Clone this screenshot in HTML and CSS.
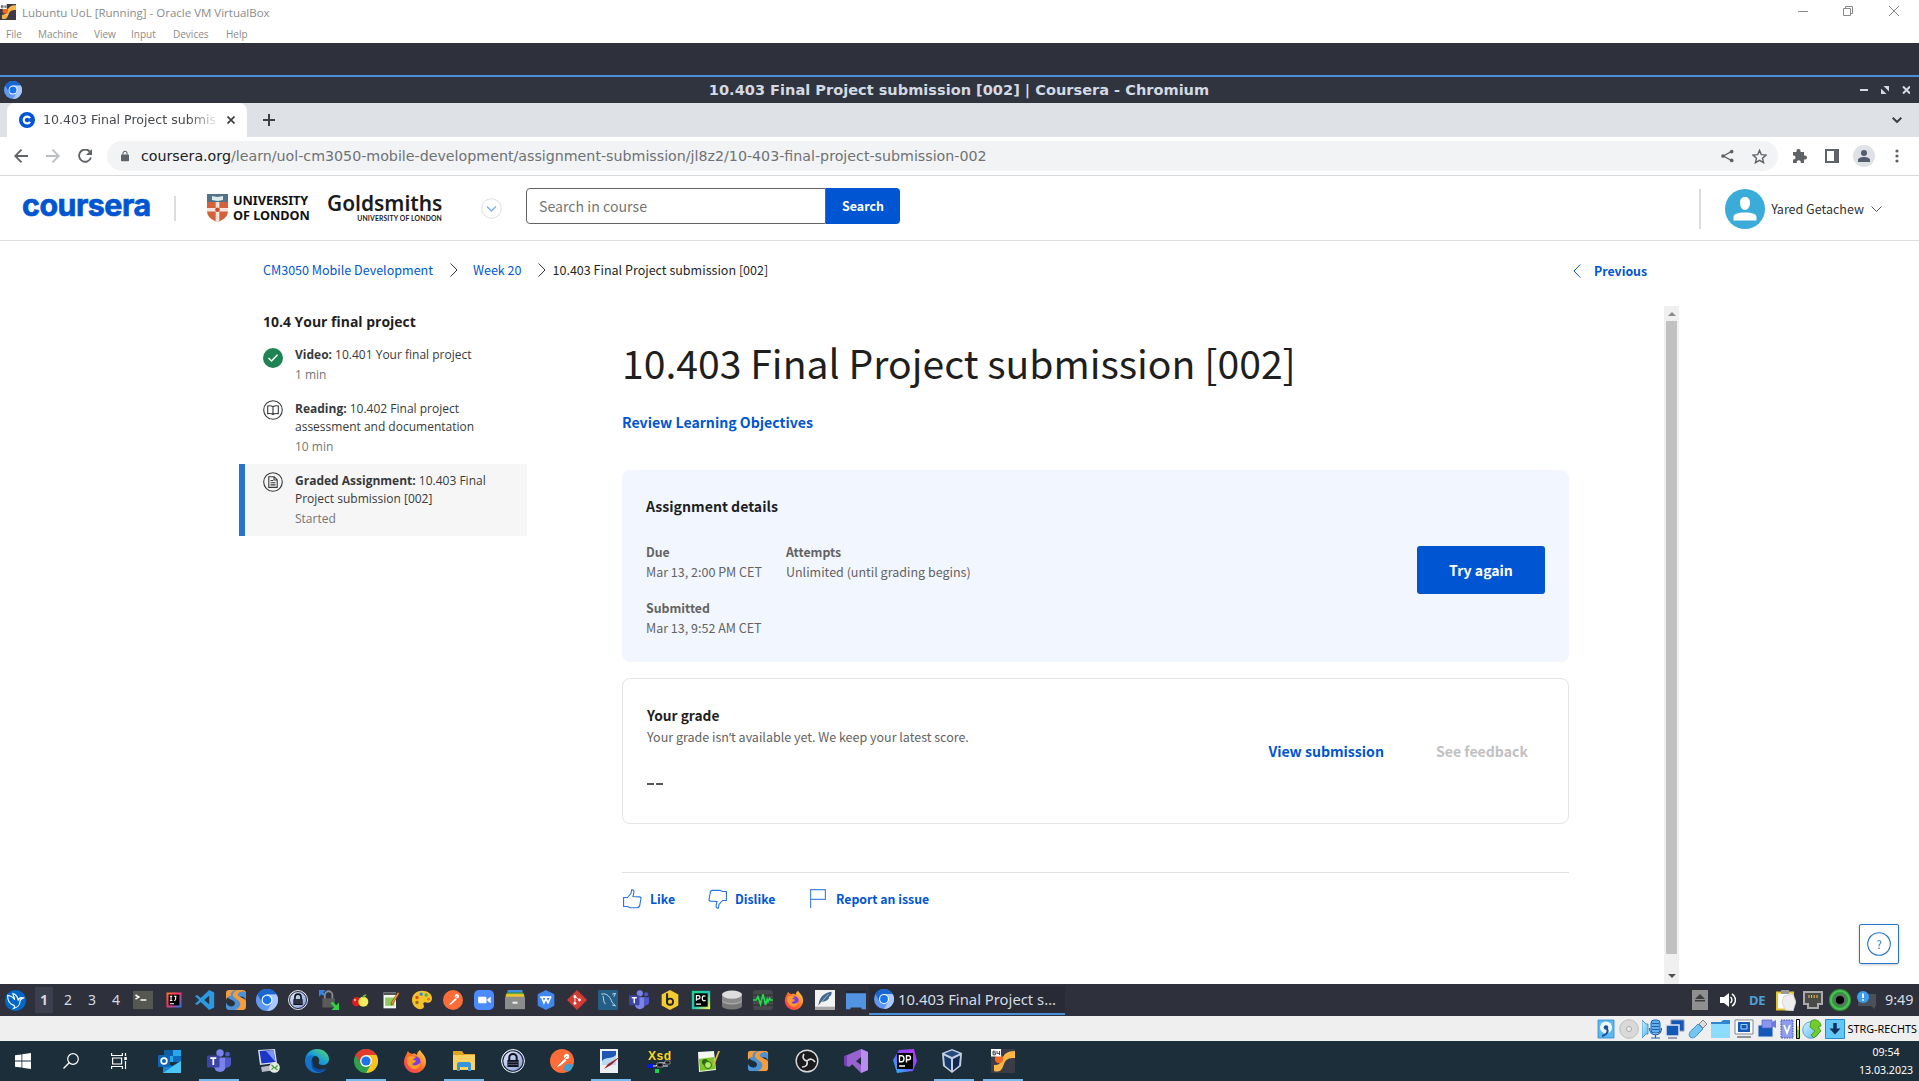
FILE: index.html
```html
<!DOCTYPE html>
<html lang="en">
<head>
<meta charset="utf-8">
<title>Lubuntu UoL [Running] - Oracle VM VirtualBox</title>
<link rel="stylesheet" href="styles.css">
</head>
<body>
<svg class="sprite" aria-hidden="true">
  <defs>
    <linearGradient id="g-edge" x1="0" y1="1" x2="1" y2="0"><stop offset="0" stop-color="#1565c0"/><stop offset=".5" stop-color="#1ba0d8"/><stop offset="1" stop-color="#5fe05a"/></linearGradient>
    <linearGradient id="g-fox" x1="0" y1="1" x2="1" y2="0"><stop offset="0" stop-color="#ff2f6b"/><stop offset=".5" stop-color="#ff6a2a"/><stop offset="1" stop-color="#ffe14a"/></linearGradient>
    <linearGradient id="g-ij" x1="0" y1="0" x2="1" y2="1"><stop offset="0" stop-color="#f9742a"/><stop offset=".45" stop-color="#fe2f6d"/><stop offset="1" stop-color="#187bf2"/></linearGradient>
    <linearGradient id="g-pc" x1="0" y1="0" x2="1" y2="1"><stop offset="0" stop-color="#21d789"/><stop offset=".5" stop-color="#1ac6b9"/><stop offset="1" stop-color="#fcf84a"/></linearGradient>
    <linearGradient id="g-dp" x1="1" y1="0" x2="0" y2="1"><stop offset="0" stop-color="#c238f0"/><stop offset=".5" stop-color="#7a4cff"/><stop offset="1" stop-color="#18c8f5"/></linearGradient>
    <linearGradient id="g-key" x1="0" y1="0" x2="1" y2="1"><stop offset="0" stop-color="#e9efff"/><stop offset="1" stop-color="#7d96d8"/></linearGradient>
    <linearGradient id="g-sky" x1="0" y1="0" x2="1" y2="1"><stop offset="0" stop-color="#d8f2ff"/><stop offset="1" stop-color="#4fb6ee"/></linearGradient>
  </defs>
  <symbol id="chromium" viewBox="0 0 24 24"><circle cx="12" cy="12" r="12" fill="#5f99f3"/><path d="M12 6h10.4A12 12 0 0 0 1.6 6l5.2 9z" fill="#1a66cf"/><path d="M12 6h10.4A12 12 0 0 1 12 24l5.2-9z" fill="#a9c8fb"/><circle cx="12" cy="12" r="5.9" fill="#fff"/><circle cx="12" cy="12" r="4.7" fill="#1a73e8"/></symbol>
  <symbol id="chrome" viewBox="0 0 24 24"><circle cx="12" cy="12" r="12" fill="#2ca24c"/><path d="M12 6h10.4A12 12 0 0 0 1.6 6l5.2 9z" fill="#e33b2e"/><path d="M12 6h10.4A12 12 0 0 1 12 24l5.2-9z" fill="#fcc31e"/><circle cx="12" cy="12" r="5.9" fill="#fff"/><circle cx="12" cy="12" r="4.6" fill="#1a73e8"/></symbol>
  <symbol id="firefox" viewBox="0 0 24 24"><path d="M3 6c1-1 1-3 2-4 1 2 2 2 4 3 2-1 4 0 5 1 0-2 1-4 3-5 1 3 6 5 6 12 0 6-5 11-11 11S1 19 1 13c0-3 1-5 2-7z" fill="url(#g-fox)"/><circle cx="12.5" cy="12.5" r="5" fill="#7a3fe0"/><path d="M4 9c3-3 8-2 9 0-2 0-3 1-3 2 1 0 3 0 3 1-1 2-3 2-4 3 1 2 5 2 8-1 0 4-3 6-6 6-5 0-8-6-7-11z" fill="#ff9b2b"/></symbol>
  <symbol id="keepass" viewBox="0 0 24 24"><circle cx="12" cy="12" r="11.4" fill="url(#g-key)" stroke="#f4f6fb" stroke-width="1"/><circle cx="12" cy="12" r="10.2" fill="none" stroke="#1b2030" stroke-width="1.1"/><path d="M8.3 11V8.6a3.7 3.7 0 0 1 7.4 0V11" fill="none" stroke="#10131c" stroke-width="2"/><path d="M6.4 11h11.2v7H6.4z" fill="#10131c"/><path d="M7 13.2h10M7 15.6h10" stroke="#8090b8" stroke-width=".6"/></symbol>
  <symbol id="teams" viewBox="0 0 24 24"><circle cx="13" cy="4" r="3.7" fill="#7b83eb"/><circle cx="20.5" cy="5.2" r="2.4" fill="#5059c9"/><path d="M7 8.6h12V17a6 6 0 0 1-12 0z" fill="#7b83eb"/><path d="M18 8.6h6V15a4 4 0 0 1-6 3z" fill="#5059c9"/><rect y="6.4" width="12.5" height="12" rx="1" fill="#3c45a5"/><path d="M3.3 9.2h6M6.3 9.2V16" stroke="#fff" stroke-width="1.7"/></symbol>
  <symbol id="postman" viewBox="0 0 24 24"><circle cx="12" cy="12" r="12" fill="#ff6c37"/><path d="M6 18l8.500-8.500 2 2L10 17z" fill="#fff"/><circle cx="16.600" cy="7.400" r="2.600" fill="#fff"/><path d="M6 18L17 7" stroke="#e8532a" stroke-width=".7"/></symbol>
  <symbol id="swirl" viewBox="0 0 24 24"><path d="M0 4c0-3 2-4 4-4h13c-6 1-8 5-7 8 1 2 4 3 6 4 5 3 4 9-2 12H4c-3 0-4-2-4-4v-5c2 5 8 6 10 3 2-2 0-5-3-6C2 10 0 8 0 4z" fill="#4b93d6"/><path d="M0 4c0-3 2-4 4-4h10C8 2 7 7 10 9c3 3 8 4 7 9-1 3-3 5-6 6h9c3 0 4-2 4-4v-7c-1-3-5-3-7-5-2-3 0-6 4-6l3 3V4c0-3-2-4-4-4h-6C7 0 5 4 6 7c-3 0-5 2-6 5z" fill="#f79c3c"/><path d="M14 5c2-4 8-4 10-1v9c-1-5-5-6-8-5 0 0-2-1-2-3z" fill="#4b93d6"/></symbol>
  <symbol id="putty" viewBox="0 0 24 24"><path fill="#3a3d48" d="M0 0h24v24H0z"/><path d="M3 22c7 2 8-2 10-7s4-6 11-6V2c-8 0-11 3-13 8s-3 6-8 6z" fill="#ffb645"/><circle cx="8" cy="10" r="4.200" fill="#f2691f"/><path d="M0 0h10v7.500H0z" fill="#fff"/><path d="M4.600 2.200H2v3.600h2.600v-2H2M6 2v2.400h3M8.600 2v4" stroke="#333" stroke-width=".9" fill="none"/></symbol>
  <symbol id="chev-r" viewBox="0 0 8 14"><path d="M.7.5L7 7 .7 13.500" fill="none" stroke="currentColor" stroke-width="1"/></symbol>
</svg>

<header class="vm-title">
  <div class="vm-caption">
    <svg class="vm-icon"><use href="#putty"/></svg><span class="vm-name">Lubuntu UoL [Running] - Oracle VM VirtualBox</span>
    <svg class="vm-controls" viewBox="0 0 102 12"><g fill="none" stroke="#8a8a8a"><path d="M0 6.500h10M45.500 3.500h7v7h-7zM47.500 3.500v-2h7v7h-2M91 1l10 10M101 1L91 11"/></g></svg>
  </div>
  <nav class="vm-menu"><span class="m1">File</span><span class="m2">Machine</span><span class="m3">View</span><span class="m4">Input</span><span class="m5">Devices</span><span>Help</span></nav>
</header>
<div class="desk-strip"></div>
<div class="win-title">
  <svg class="win-icon"><use href="#chromium"/></svg>
  <span class="win-name">10.403 Final Project submission [002] | Coursera - Chromium</span>
  <svg class="win-controls" viewBox="0 0 50 10"><path d="M0 4h8v2H0zM23.500 1h5.500v5.500zM21 3.500V9h5.500z" fill="#d3dae3"/><path d="M43 1.500l7 7M50 1.500l-7 7" stroke="#d3dae3" stroke-width="2"/></svg>
</div>

<div class="tabs">
  <div class="tab">
    <svg class="favicon" viewBox="0 0 16 16"><circle cx="8" cy="8" r="8" fill="#0056d2"/><path d="M11 6.200a3.400 3.400 0 1 0 0 3.600" fill="none" stroke="#fff" stroke-width="2.200"/></svg>
    <span class="tab-text">10.403 Final Project submis</span>
    <svg class="tab-x" viewBox="0 0 8 8"><path d="M.5.500l7 7M7.500.500l-7 7" stroke="#3c4043" stroke-width="1.700"/></svg>
  </div>
  <svg class="plus" viewBox="0 0 12 12"><path d="M6 0v12M0 6h12" stroke="#3c4043" stroke-width="2"/></svg>
  <svg class="tab-chev" viewBox="0 0 10 6"><path d="M.7.700L5 5 9.300.700" fill="none" stroke="#3c4043" stroke-width="2"/></svg>
</div>

<div class="toolbar">
  <svg class="nav-icon" viewBox="0 0 14 14"><path d="M7.500.700L1.200 7l6.300 6.300M1.200 7H14" fill="none" stroke="#5f6368" stroke-width="1.800"/></svg>
  <svg class="nav-icon" viewBox="0 0 14 14"><path d="M6.500.700L12.800 7l-6.300 6.300M12.800 7H0" fill="none" stroke="#bcbfc2" stroke-width="1.800"/></svg>
  <svg class="nav-icon" viewBox="0 0 14 14"><path d="M11.800 2.600A6.100 6.100 0 1 0 13 8.500" fill="none" stroke="#5f6368" stroke-width="1.900"/><path d="M14 0v6H8z" fill="#5f6368"/></svg>
  <div class="omnibox">
    <svg class="lock" viewBox="0 0 10 13"><path d="M1 4.500h8a1 1 0 0 1 1 1V12a1 1 0 0 1-1 1H1a1 1 0 0 1-1-1V5.500a1 1 0 0 1 1-1z" fill="#5f6368"/><path d="M2.500 5V3a2.500 2.500 0 0 1 5 0v2" fill="none" stroke="#5f6368" stroke-width="1.300"/></svg>
    <span class="url"><b>coursera.org</b>/learn/uol-cm3050-mobile-development/assignment-submission/jl8z2/10-403-final-project-submission-002</span>
    <svg class="share" viewBox="0 0 14 14"><path d="M11.500 2L2.500 7l9 5" fill="none" stroke="#5f6368" stroke-width="1.300"/><g fill="#5f6368"><circle cx="11.500" cy="2.200" r="2"/><circle cx="2.200" cy="7" r="2"/><circle cx="11.500" cy="11.800" r="2"/></g></svg>
    <svg class="star" viewBox="0 0 14 14"><path d="M7 1.300l1.750 4 4.350.4-3.300 2.850 1 4.250L7 10.550 3.200 12.800l1-4.250L.9 5.700l4.350-.4z" fill="none" stroke="#5f6368" stroke-width="1.300"/></svg>
  </div>
  <svg class="ext" viewBox="0 0 15 15"><path d="M1 3h3.500C4 1 5 0 6.500 0S9 1 8.500 3H12v3.500c2-.4 3 .5 3 2s-1 2.400-3 2V14H8.800c.3-2-.8-2.800-2-2.800s-2.300.8-2 2.800H1v-3.500c1.800.2 2.500-.8 2.500-2S2.800 6.300 1 6.500z" fill="#5f6368"/></svg>
  <svg class="panel" viewBox="0 0 14 14"><path d="M0 0h14v14H0zM2 2v10h7V2z" fill="#5f6368" fill-rule="evenodd"/></svg>
  <svg class="profile" viewBox="0 0 22 22"><circle cx="11" cy="11" r="11" fill="#dee1e6"/><circle cx="11" cy="8" r="3" fill="#545d70"/><path d="M5 17v-2c0-2 3-3 6-3s6 1 6 3v2z" fill="#545d70"/></svg>
  <svg class="dots" viewBox="0 0 4 14"><g fill="#5f6368"><circle cx="2" cy="2" r="1.600"/><circle cx="2" cy="7" r="1.600"/><circle cx="2" cy="12" r="1.600"/></g></svg>
</div>

<div class="site-head">
  <span class="brand">coursera</span>
  <i class="brand-sep"></i>
  <svg class="shield" viewBox="0 0 21 28"><path d="M0 0h21v17c0 6-5 9-10.500 11C5 26 0 23 0 17z" fill="#d5603a"/><path d="M0 0h21v8H0z" fill="#4f7488"/><path d="M5 2l5.500 1L16 2v4l-5.500 1L5 6z" fill="#dfe8ec"/><path d="M8.700 8h3.600v6H21v3.600h-8.700v9.700l-1.800.7-1.800-.7v-9.700H0V14h8.700z" fill="#f4e6de"/><circle cx="10.500" cy="15.800" r="2.300" fill="#c84a28"/></svg>
  <div class="uol"><span>UNIVERSITY</span><span>OF LONDON</span></div>
  <div class="gold"><span class="gold-name">Goldsmiths</span><span class="gold-sub">UNIVERSITY OF LONDON</span></div>
  <svg class="switch" viewBox="0 0 21 21"><circle cx="10.500" cy="10.500" r="9.800" fill="#fff" stroke="#dcdcdc"/><path d="M6 8.500l4.500 4.500L15 8.500" fill="none" stroke="#7fb0ee" stroke-width="1.400"/></svg>
  <div class="search"><span class="search-in">Search in course</span><span class="search-btn">Search</span></div>
  <div class="account">
    <svg class="avatar" viewBox="0 0 40 40"><circle cx="20" cy="20" r="20" fill="#3bacda"/><path d="M20 8c3.500 0 5 2.500 5 5.500 0 4-2 7.500-5 7.500s-5-3.500-5-7.500C15 10.500 16.500 8 20 8zM8.500 31.500V28c0-3 4-4.500 11.500-4.500S31.500 25 31.500 28v3.500z" fill="#fff"/></svg>
    <span>Yared Getachew</span>
    <svg class="acc-chev" viewBox="0 0 11 6"><path d="M.5.500L5.500 5.500l5-5" fill="none" stroke="#555"/></svg>
  </div>
</div>

<main class="page">
  <div class="crumbs">
    <a class="c1">CM3050 Mobile Development</a><svg class="cv v1"><use href="#chev-r"/></svg><a class="c2">Week 20</a><svg class="cv v2"><use href="#chev-r"/></svg><span>10.403 Final Project submission [002]</span>
    <span class="prev"><svg class="cv back"><use href="#chev-r"/></svg>Previous</span>
  </div>
  <div class="columns">
    <aside class="side">
      <h2>10.4 Your final project</h2>
      <div class="item"><svg class="st low" viewBox="0 0 20 20"><circle cx="10" cy="10" r="10" fill="#1f8354"/><path d="M5.500 10l3 3 6-6.300" fill="none" stroke="#fff" stroke-width="1.400"/></svg>
        <div><p><b>Video:</b> 10.401 Your final project</p><small>1 min</small></div></div>
      <div class="item"><svg class="st" viewBox="0 0 20 20"><g fill="none" stroke="#373a3c" stroke-width="1.100"><circle cx="10" cy="10" r="9.300"/><path d="M10 6.800C8.500 5.700 6.500 5.600 4.700 6v7.600c1.800-.3 3.800-.2 5.300.9 1.500-1.100 3.500-1.200 5.300-.9V6c-1.800-.4-3.800-.3-5.300.800zM10 6.800v7.700"/></g></svg>
        <div><p><b>Reading:</b> 10.402 Final project<br>assessment and documentation</p><small>10 min</small></div></div>
      <div class="item on"><svg class="st" viewBox="0 0 20 20"><g fill="none" stroke="#373a3c" stroke-width="1.100"><circle cx="10" cy="10" r="9.300"/><path d="M5.800 4.700h5.400l3 3v7.700H5.800zM11 4.700V8h3.200M7.500 8.500H10M7.500 10.700h5M7.500 12.900h5"/></g></svg>
        <div><p><b>Graded Assignment:</b> 10.403 Final<br>Project submission [002]</p><small>Started</small></div></div>
    </aside>
    <section class="main">
      <h1>10.403 Final Project submission [002]</h1>
      <a class="review">Review Learning Objectives</a>
      <div class="card details">
        <div class="facts">
          <h3>Assignment details</h3>
          <dl><div><dt>Due</dt><dd>Mar 13, 2:00 PM CET</dd></div><div><dt>Attempts</dt><dd>Unlimited (until grading begins)</dd></div></dl>
          <dl><div><dt>Submitted</dt><dd>Mar 13, 9:52 AM CET</dd></div></dl>
        </div>
        <span class="again">Try again</span>
      </div>
      <div class="card grade">
        <div class="facts"><h3>Your grade</h3><p>Your grade isn<span class="apos">’</span>t available yet. We keep your latest score.</p><strong><i></i><i></i></strong></div>
        <a class="view">View submission</a><span class="feedback">See feedback</span>
      </div>
      <div class="actions">
        <svg class="thumb" viewBox="0 0 19 20"><path d="M.6 8.500h3.800L8 4.500 8.600.9c1.500-.4 2.600 1 2.300 2.500L10 7.600l6.500.3c1.300.2 1.700 1 1.400 2.100l-1.300 7c-.3 1-1 1.500-2 1.600l-7.500.2-2.500-1.300H.600z" fill="none" stroke="#2a73dc" stroke-width="1.100"/></svg><a class="a1">Like</a>
        <svg class="thumb down" viewBox="0 0 19 20"><path d="M.6 8.500h3.800L8 4.500 8.600.9c1.500-.4 2.600 1 2.300 2.500L10 7.600l6.500.3c1.300.2 1.700 1 1.400 2.100l-1.300 7c-.3 1-1 1.500-2 1.600l-7.500.2-2.500-1.300H.600z" fill="none" stroke="#2a73dc" stroke-width="1.100"/></svg><a class="a2">Dislike</a>
        <svg class="flag" viewBox="0 0 16 19"><path d="M.6 19V.6h14.800v9.800H.6" fill="none" stroke="#4a88e0" stroke-width="1.200"/></svg><a>Report an issue</a>
      </div>
    </section>
    <div class="scroll"><svg viewBox="0 0 8 4"><path d="M4 0l4 4H0z" fill="#8a8a8a"/></svg><i></i><svg viewBox="0 0 8 4"><path d="M0 0h8L4 4z" fill="#505050"/></svg></div>
  </div>
  <div class="help"><svg viewBox="0 0 24 24"><circle cx="12" cy="12" r="11.300" fill="none" stroke="#2a73cc" stroke-width="1.100"/></svg><span>?</span></div>
</main>

<div class="lx">
  <svg class="lx-logo" viewBox="0 0 24 24"><circle cx="12" cy="12" r="12" fill="#0068c8"/><path d="M3 6c5 1 7 3 8 5 0-3-2-5-2-7 4 1 6 5 6 8 1-3 3-4 6-3-3 1-4 2-4 5s-3 6-7 7c2-2 1-3-1-4-3-1-6-5-6-11z" fill="none" stroke="#fff" stroke-width="1.300"/></svg>
  <div class="desks"><b>1</b><span>2</span><span>3</span><span>4</span></div>
  <div class="lx-icons">
    <svg viewBox="0 0 24 24"><path d="M0 1h24v22H0z" fill="#555753"/><path d="M3 6l4 2.500L3 11M9 12h7" fill="none" stroke="#fff" stroke-width="1.800"/></svg>
    <svg viewBox="0 0 24 24"><path d="M3 3h18v18H3z" fill="url(#g-ij)"/><path d="M5.500 5.500h13v13h-13z" fill="#000"/><path d="M7 7.500h3M8.500 7.500v5M7 12.500h3M12 7.500h3M14 7.500v3.500q0 1.500-2 1.500M7 16.500h5" fill="none" stroke="#fff" stroke-width="1.300"/></svg>
    <svg viewBox="0 0 24 24"><path d="M17 0l6 3v18l-6 3L7 14.500 2.500 18 0 16.500 5 12 0 7.500 2.500 6 7 9.500zM17 7l-6 5 6 5z" fill="#2a9be2" fill-rule="evenodd"/></svg>
    <svg><use href="#swirl"/></svg>
    <svg class="big"><use href="#chromium"/></svg>
    <svg><use href="#keepass"/></svg>
    <svg viewBox="0 0 24 24"><path d="M7 11V6a4 4 0 0 1 9 0v5" fill="none" stroke="#8a8a8a" stroke-width="2.200"/><path d="M4 10h15v11H4z" fill="#5a5a5a"/><path d="M0 0h8L0 8z" fill="#3584e4"/><path d="M24 24h-9l9-9z" fill="#33d045"/><path d="M15 15l6 6" stroke="#33d045" stroke-width="3"/><path d="M2 2l4 4" stroke="#3584e4" stroke-width="3"/></svg>
    <svg viewBox="0 0 24 24"><circle cx="8" cy="14" r="5.500" fill="#e01b1b"/><circle cx="16" cy="14" r="6" fill="#f4ec58"/><path d="M15 9c0-3 2-4 5-4-1 3-2 4-5 4z" fill="#5fb32b"/><circle cx="6" cy="12" r="1.500" fill="#ff9c9c"/></svg>
    <svg viewBox="0 0 24 24"><path d="M3 3h15v19H3z" fill="#f3f6ee"/><path d="M3 3h15v3H3z" fill="#555"/><path d="M5 9h11v10H5z" fill="#8ecb57"/><path d="M22 4l-8 13-2 1 .500-3L20 3z" fill="#f0a030" stroke="#8b3a14" stroke-width=".8"/></svg>
    <svg viewBox="0 0 24 24"><path d="M12 1c7 0 12 4 12 9s-4 6-7 5-4 1-3 3 0 5-4 5C4 23 0 17 0 12 0 6 5 1 12 1z" fill="#f3c32c"/><circle cx="6" cy="9" r="2" fill="#e5452f"/><circle cx="11" cy="5" r="2" fill="#3d85d8"/><circle cx="17" cy="6" r="2" fill="#53b04a"/><circle cx="20" cy="11" r="1.700" fill="#e27b2b"/><circle cx="6" cy="15" r="2" fill="#9c6c1d"/></svg>
    <svg><use href="#postman"/></svg>
    <svg viewBox="0 0 24 24"><rect width="24" height="24" rx="6" fill="#4a8cff"/><path d="M5 8h8c1.500 0 2 1 2 2v6H7c-1.500 0-2-1-2-2zM16 11l4-3v8l-4-3z" fill="#fff"/></svg>
    <svg viewBox="0 0 24 24"><path d="M3 0h18v3H3z" fill="#3f8fe0"/><path d="M2 3h20v3H2z" fill="#53b04a"/><path d="M1 5h22v4H1z" fill="#f3c32c"/><path d="M0 8h24v15H0z" fill="#8b8d8a"/><path d="M9 14h6v2.500H9z" fill="#eee"/></svg>
    <svg viewBox="0 0 24 24"><path d="M12 0l10 5v14l-10 5-10-5V5z" fill="#3f86ee"/><path d="M5 8.500h13.500M7 9l2.500 6.500L12 10l2.500 5.500L17.500 9" fill="none" stroke="#fff" stroke-width="1.900"/></svg>
    <svg viewBox="0 0 24 24"><path d="M12 0l12 12-12 12L0 12z" fill="#d63a32"/><path d="M9.500 6v11M10 8l5 4" stroke="#fff" stroke-width="1"/><g fill="#fff"><circle cx="9.500" cy="8" r="1.700"/><circle cx="15" cy="12" r="1.700"/><circle cx="9.500" cy="16" r="1.700"/></g></svg>
    <svg viewBox="0 0 24 24"><rect width="24" height="24" rx="1.500" fill="#245f87"/><path d="M4 5c7-2 11 4 13 10l4 4-4-1M6 7c1 4 0 7 3 10M17 5l4-1-2 4" fill="none" stroke="#cfe3ee" stroke-width="1.100"/></svg>
    <svg><use href="#teams"/></svg>
    <svg viewBox="0 0 24 24"><path d="M12 0l10 5.500v13L12 24 2 18.500v-13z" fill="#f7ca2e"/><path d="M8.500 4v12" stroke="#20242c" stroke-width="2.400"/><circle cx="12" cy="14" r="3.700" fill="none" stroke="#20242c" stroke-width="2.200"/></svg>
    <svg viewBox="0 0 24 24"><path d="M1 1h22v22H1z" fill="url(#g-pc)"/><path d="M4 4h16v16H4z" fill="#000"/><path d="M6.500 13V6.800h2.300q2 0 2 2t-2 2H6.500M17.500 7.500q-4-1.500-4 2.500t4 2.500M6 17h6" fill="none" stroke="#fff" stroke-width="1.500"/></svg>
    <svg viewBox="0 0 24 24"><path d="M0 13h24v6c0 6-24 6-24 0z" fill="#777"/><ellipse cx="12" cy="13" rx="12" ry="4.500" fill="#a9a9a9"/><path d="M0 6h24v5c0 6-24 6-24 0z" fill="#8a8a8a"/><ellipse cx="12" cy="5.500" rx="12" ry="5" fill="#ddd"/></svg>
    <svg viewBox="0 0 24 24"><rect width="24" height="24" rx="4" fill="#46484b"/><path d="M0 6h24M0 12h24M0 18h24" stroke="#303235" stroke-width="1.500"/><path d="M0 12h4l2-4 3 9 3-12 3 13 2-7 1 3 2-4 1 2h3" fill="none" stroke="#1ce04e" stroke-width="1.900"/></svg>
    <svg><use href="#firefox"/></svg>
    <svg viewBox="0 0 24 24"><path d="M0 0h24v24H0z" fill="#f2f2f2"/><path d="M0 20h24v4H0z" fill="#a7a7a7"/><path d="M4 19C5 9 10 3 20 2c0 4-1 5-3 6 0 4-5 6-9 6z" fill="#42688f"/><path d="M4 19L16 5" stroke="#fff" stroke-width=".6"/></svg>
    <svg viewBox="0 0 24 24"><path d="M0 1h24v2H0z" fill="#1e2430"/><path d="M0 4h24v19h-5l-1-2H6l-1 2H0z" fill="#5294e2"/></svg>
  </div>
  <div class="task"><svg><use href="#chromium"/></svg><span>10.403 Final Project s…</span></div>
  <div class="tray">
    <svg class="w16" viewBox="0 0 16 20"><path d="M0 0h16v20H0z" fill="#8f8f8f"/><path d="M8 4l5 5H3zM3 10h10v1.500H3z" fill="#3c3c3c"/></svg>
    <svg class="spk" viewBox="0 0 16 16"><path d="M0 5h4l5-4v14l-5-4H0z" fill="#fff"/><path d="M10.500 5a4 4 0 0 1 0 6M12 2a7 7 0 0 1 0 12" fill="none" stroke="#fff" stroke-width="1.500"/></svg>
    <b>DE</b>
    <svg class="clip" viewBox="0 0 20 21"><path d="M1 2.500h16v17H1z" fill="#fff" stroke="#e8c42c" stroke-width="2"/><path d="M5 0h8v4H5z" fill="#999"/><path d="M8 6l9-2 3 8-3 9-8-1-3-8z" fill="#eee" stroke="#c6c6c6" stroke-width=".7"/></svg>
    <svg class="net" viewBox="0 0 20 20"><path d="M1 2h18v12h-4v4H5v-4H1z" fill="#4a4a48" stroke="#aaa" stroke-width="2"/><path d="M6 5v3M8.600 5v3M11.200 5v3M14 5v3" stroke="#f0c43c" stroke-width="1"/></svg>
    <svg class="ring" viewBox="0 0 22 22"><circle cx="11" cy="11" r="11" fill="#2f9b3c"/><circle cx="11" cy="11" r="9" fill="none" stroke="#55c45c" stroke-width="1.500"/><circle cx="11" cy="11" r="6" fill="#666"/><circle cx="11" cy="11" r="4" fill="#000"/></svg>
    <svg class="note" viewBox="0 0 19 20"><path d="M1 4h18v12h-1v3l-4-3H1z" fill="#4c5058"/><circle cx="6" cy="7" r="6" fill="#3a9df2"/><path d="M6 3.500v4.500M6 9.200v1.600" stroke="#fff" stroke-width="1.800"/></svg>
    <span class="lx-time">9:49</span>
  </div>
</div>

<div class="vm-status">
  <svg viewBox="0 0 20 20"><path d="M2 1h16v18H2z" fill="#5cb9ef" stroke="#2a8ad0" stroke-width=".8"/><circle cx="10" cy="8.500" r="6" fill="#eef9ff"/><circle cx="10" cy="8.500" r="2.300" fill="#1e4f9c"/><path d="M11 10c2 3-1 6-5 7" stroke="#1e4f9c" stroke-width="2" fill="none"/></svg>
  <svg viewBox="0 0 20 20"><circle cx="10" cy="10" r="9.300" fill="#d9d9d9" stroke="#bdbdbd"/><circle cx="10" cy="10" r="2.500" fill="#eee" stroke="#aaa"/></svg>
  <svg viewBox="0 0 20 20"><path d="M0 1l4 4h2v10H4l-4 4z" fill="url(#g-sky)" stroke="#2a8ad0" stroke-width=".8"/><rect x="9" y="1" width="9" height="13" rx="3" fill="#5fb0ea" stroke="#1d62b0"/><path d="M7.500 9c0 9 12 9 12 0M13.500 16v3M9 19h9M10 4.500h7M10 7.500h7M10 10.500h7" fill="none" stroke="#1d62b0" stroke-width="1.200"/></svg>
  <svg viewBox="0 0 20 20"><path d="M6 1h13v11H6z" fill="#1559b8" stroke="#8a99a8"/><path d="M1 6h13v11H1z" fill="#1559b8" stroke="#dfe6ee" stroke-width="1.500"/><path d="M3 19h9" stroke="#889" stroke-width="1.500"/></svg>
  <svg viewBox="0 0 20 20"><path d="M2 18c-2-3 0-6 3-8l5-5 5 5-5 5c-2 3-5 5-8 3z" fill="#74c4f5" stroke="#3e93cf"/><path d="M11 5l4-4 4 4-4 4z" fill="#ddd" stroke="#888"/></svg>
  <svg viewBox="0 0 20 20"><path d="M0 3h10l2-2h7v18H0z" fill="#2f87cf"/><path d="M0 5h19v14H0z" fill="#8cdcff"/></svg>
  <svg viewBox="0 0 20 20"><path d="M1 1h18v14H1z" fill="#fff" stroke="#7e8790"/><path d="M4 3h12v10H4z" fill="#1559b8"/><path d="M7 5.500h6v4.500H7z" fill="none" stroke="#9cd6ff"/><path d="M3 18h14" stroke="#8b949c" stroke-width="2"/></svg>
  <svg viewBox="0 0 20 20"><path d="M1 6h15v12H1z" fill="#1559b8" stroke="#dfe6ee"/><path d="M5 1h10v8H5z" fill="#8796f0" stroke="#5560b8" stroke-width=".7"/><path d="M15 3l4-2v8l-4-2z" fill="#6b79e0"/></svg>
  <svg class="w14" viewBox="0 0 14 20"><path d="M1 1h12v18H1z" fill="#8d9cf0" stroke="#3d4cab" stroke-dasharray="1.500 1"/><path d="M4 6l3 8 3-8" fill="none" stroke="#fff" stroke-width="1.800"/></svg>
  <svg class="w4" viewBox="0 0 4 20"><path d="M.5.500h3v19h-3z" fill="#fff" stroke="#000"/><path d="M1 7h2v12H1z" fill="#6fd60c"/><path d="M1 7h2v4H1z" fill="#f1e400"/></svg>
  <svg viewBox="0 0 20 20"><circle cx="9" cy="11" r="8.300" fill="url(#g-sky)" stroke="#3e93cf" stroke-width=".8"/><path d="M9 2c4-3 10 0 10 5l-3 1 3 4-7 7-3-3 4-4-5-4z" fill="#72cc2a" stroke="#3f9418" stroke-width=".8"/></svg>
  <svg viewBox="0 0 20 20"><path d="M.5.500h19v19H.500z" fill="#63c8f7" stroke="#2a8ad0"/><path d="M10 4v7" stroke="#10335e" stroke-width="3.500"/><path d="M4.500 9.500h11L10 15.500z" fill="#10335e"/></svg>
  <span>STRG-RECHTS</span>
</div>

<div class="taskbar">
  <svg class="sys start" viewBox="0 0 16 16"><path d="M0 2.300l6.500-.9v6.200H0zM7.300 1.300L16 0v7.600H7.300zM0 8.400h6.500v6.200L0 13.700zM7.300 8.400H16V16l-8.700-1.300z" fill="#fff"/></svg>
  <svg class="sys" viewBox="0 0 16 16"><circle cx="10" cy="6" r="5.300" fill="none" stroke="#fff" stroke-width="1.200"/><path d="M6.200 9.800L.5 15.500" stroke="#fff" stroke-width="1.300"/></svg>
  <svg class="sys" viewBox="0 0 16 16"><path d="M.6 0v2.500h10.800V0M.6 16v-2.500h10.800V16M1.600 5h9v6h-9zM14.500 0v3M14.500 8v8" fill="none" stroke="#fff" stroke-width="1.200"/><path d="M13.300 4h2.500v3h-2.500z" fill="#fff"/></svg>
  <div class="apps">
    <span><svg viewBox="0 0 24 24"><path d="M6 1h17v12H6z" fill="#28a8ea"/><path d="M6 1h9v6H6z" fill="#0f5ea8"/><path d="M15 7h8v6h-8z" fill="#0f6cbd"/><path d="M5 12l9 5 9-5v12H5z" fill="#1a86d8"/><path d="M5 24l18-12v12z" fill="#4cc6f5"/><rect y="6" width="12" height="12" rx="1" fill="#1066b5"/><circle cx="6" cy="12" r="2.900" fill="none" stroke="#fff" stroke-width="1.600"/></svg></span>
    <span class="open"><svg><use href="#teams"/></svg></span>
    <span><svg viewBox="0 0 24 24"><path d="M2 1l17-1 2 14-17 2z" fill="#d8dde5"/><path d="M3.500 2l14-1 2 12-14 1.500z" fill="#1a35c8"/><path d="M10 2l7.500-1 2 12z" fill="#7d94f2"/><path d="M5 18l12-2 2 5-13 2z" fill="#b5bac4"/><circle cx="18.500" cy="18.500" r="5.300" fill="#e4e7e2"/><path d="M15.500 16l2.500 2.300-2.500 2.300M21.500 16.500L19 19l2.500 2" fill="none" stroke="#3ba336" stroke-width="1.200"/></svg></span>
    <span><svg viewBox="0 0 24 24"><path d="M0 13C0 5 5 0 12 0c7 0 12 5 12 10 0 4-3 6-6 6s-5-1-4-3c1-3-1-6-4-6-4 0-8 2-10 6z" fill="url(#g-edge)"/><path d="M0 12c1-5 6-7 10-5-3 1-4 4-3 8 1 5 6 8 11 6 2 0 3-1 4-2-2 3-6 5-10 5C5 24 0 18 0 12z" fill="#1473cc"/><path d="M8 11c-2 6 4 12 13 8-3 5-9 5-12 2-3-2-3-7-1-10z" fill="#0d4c9c"/></svg></span>
    <span class="open"><svg><use href="#chrome"/></svg></span>
    <span><svg><use href="#firefox"/></svg></span>
    <span class="open"><svg viewBox="0 0 24 24"><path d="M1 2h9l2 3h11v3H1z" fill="#dfa320"/><path d="M1 6h22v15H1z" fill="#fbd161"/><path d="M5 22v-7c0-1 1-2 2-2h10c1 0 2 1 2 2v7h-3v-4H8v4z" fill="#3795dc"/></svg></span>
    <span><svg><use href="#keepass"/></svg></span>
    <span><svg viewBox="0 0 24 24"><use href="#postman"/><path d="M13 20c1-5 5-6 8-5l3 1-2 3c-1 4-5 5-9 1z" fill="#4b9cc8"/></svg></span>
    <span class="open"><svg class="left" viewBox="0 0 24 24"><path d="M3 0h18v24H3z" fill="#eceff4"/><path d="M5 2h14v14H5z" fill="#2057b4"/><path d="M5 12c4-5 9-1 14-6v10H5z" fill="#b9dcf4"/><path d="M24 7l-10 9-7 4 4-5z" fill="#a62121"/></svg></span>
    <span><svg viewBox="0 0 24 24"><text class="xsd" x="0" y="10.500" textLength="23">Xsd</text><path d="M3 17h5l3-3h9M11 17h9" fill="none" stroke="#eee" stroke-width="1"/><path d="M0 15h5v4H0z" fill="#0a1be0"/><path d="M9 14h6v4H9zM17 12h5v3h-5z" fill="#111" stroke="#ddd" stroke-width=".5"/><path d="M7 20h4v4H7z" fill="#12d848"/></svg></span>
    <span><svg viewBox="0 0 24 24"><path d="M1 3l16-1 2 19-17 2z" fill="#f4f7ef"/><path d="M2 10l15-2 1.500 12L3 22z" fill="#7cc628"/><circle cx="8" cy="13" r="3" fill="#2c6b13"/><circle cx="11" cy="16" r="3.500" fill="#b7e86a" stroke="#2c6b13"/><path d="M23 2l-6 15-1 1V15l5-13z" fill="#e5b53a"/></svg></span>
    <span><svg viewBox="-2 -2 28 28"><use href="#swirl" width="24" height="24"/></svg></span>
    <span><svg viewBox="0 0 24 24"><circle cx="12" cy="12" r="10.800" fill="#1b1a1c" stroke="#d9d9d9" stroke-width="1.400"/><path d="M12 12c-4-1-5-4-3-7M12 12c3-3 6-2 8 1M12 12c1 4-1 6-5 6" fill="none" stroke="#ddd" stroke-width="1.700"/></svg></span>
    <span><svg viewBox="0 0 24 24"><path d="M17 0l7 3v18l-7 3L1 8l3-2 13 10V8L5 18l-4-2 0-9z" fill="#9863d0"/><path d="M17 0l7 3v18l-7 3z" fill="#b98cf0"/><path d="M0 7l3-1v12l-3-2z" fill="#7441b0"/></svg></span>
    <span><svg viewBox="0 0 24 24"><path d="M6 1l15-1 3 12-4 10L4 24 0 11z" fill="url(#g-dp)"/><path d="M4 4h16v16H4z" fill="#000"/><path d="M6.500 6.800h2q2.500 0 2.500 3t-2.500 3h-2zM13.500 13.400V6.800h2q2 0 2 2t-2 2h-2M6 17h6" fill="none" stroke="#fff" stroke-width="1.400"/></svg></span>
    <span class="open"><svg class="left" viewBox="0 0 24 24"><path d="M12 0l10 4-1 13-9 7-9-7L2 4z" fill="#c3cfe0"/><path d="M12 1.500l7.500 3L12 8 4.500 4.500z" fill="#23497f"/><path d="M4 6.500l7 3.500v11.500l-6-5z" fill="#17396b"/><path d="M20 6.500L13 10v11.500l6-5z" fill="#0f2950"/></svg></span>
    <span class="open"><svg><use href="#putty"/></svg></span>
  </div>
  <div class="clock"><span>09:54</span><span>13.03.2023</span></div>
</div>
</body>
</html>
```
FILE: styles.css
```css
* { box-sizing: border-box; }
body { margin: 0; width: 1919px; height: 1081px; overflow: hidden; display: flex; flex-direction: column; background: #fff;
  font-family: "Noto Sans CJK SC", sans-serif; color: #1f1f1f; }
svg { display: block; flex: none; }
.sprite { position: absolute; width: 0; height: 0; }
p, h1, h2, h3, dl, dd { margin: 0; }
body > * { flex: none; }
span, a, b { white-space: nowrap; }

/* VirtualBox window */
.vm-title { height: 43px; color: #8b8b8b; font-family: "Open Sans", sans-serif; }
.vm-caption { display: flex; align-items: center; height: 24px; }
.vm-icon { width: 16px; height: 16px; }
.vm-name { margin-left: 6px; font-size: 11.5px; line-height: 24px; padding-top: 1px; }
.vm-controls { width: 102px; height: 12px; margin: 0 19px 2px auto; }
.vm-menu { display: flex; padding-left: 6px; font-size: 10px; line-height: 20px; }
.m1 { width: 32px; } .m2 { width: 56px; } .m3 { width: 37px; } .m4 { width: 42px; } .m5 { width: 53px; }
.desk-strip { height: 34px; background: #2e313c; border-bottom: 2px solid #4a90d9; }
.win-title { display: flex; align-items: center; height: 26px; padding: 0 9px 0 4px; background: #30343f; }
.win-icon { width: 18px; height: 18px; }
.win-name { flex: 1; padding: 0 0 1px 36px; text-align: center; color: #d3dae3; font: bold 14.57px/26px "DejaVu Sans", sans-serif; }
.win-controls { width: 50px; height: 10px; }

/* Browser chrome */
.tabs { display: flex; align-items: center; height: 34px; padding: 0 17px 0 7px; background: #dee1e6; }
.tab { display: flex; align-items: center; width: 240px; height: 34px; padding: 0 12px; border-radius: 8px 8px 0 0; background: #fff; }
.favicon { width: 16px; height: 16px; }
.tab-text { width: 183px; margin-left: 8px; color: #45494d; font: 12.6px/34px "DejaVu Sans", sans-serif;
  -webkit-mask-image: linear-gradient(90deg, #000 145px, transparent 177px); mask-image: linear-gradient(90deg, #000 145px, transparent 177px); }
.tab-x { width: 8px; height: 8px; margin-left: 1px; }
.plus { width: 12px; height: 12px; margin-left: 16px; }
.tab-chev { width: 10px; height: 6px; margin-left: auto; }
.toolbar { display: flex; align-items: center; height: 39px; padding: 0 20px 0 14px; border-bottom: 1px solid #d8d9db; }
.nav-icon { width: 14px; height: 14px; margin-right: 18px; }
.omnibox { display: flex; align-items: center; width: 1672px; height: 30px; margin-left: -3px; padding: 0 11px 0 14px; border-radius: 15px; background: #f1f3f4; }
.lock { width: 8px; height: 12px; }
.url { margin-left: 12px; color: #6f7276; font: 14.225px/30px "DejaVu Sans", sans-serif; }
.url b { color: #202124; font-weight: 400; }
.share { width: 13px; height: 14px; margin-left: auto; }
.star { width: 15px; height: 15px; margin-left: 18px; }
.ext { width: 15px; height: 15px; margin-left: 14px; }
.panel { width: 14px; height: 14px; margin-left: 18px; }
.profile { width: 22px; height: 22px; margin-left: 14px; }
.dots { width: 4px; height: 14px; margin-left: 20px; }

/* Coursera header */
.site-head { display: flex; align-items: flex-start; height: 65px; border-bottom: 1px solid #dedede; }
.brand { width: 127px; margin: 4px 0 0 22px; color: #0056d2; font: 700 30.4px/50px Inter, sans-serif; letter-spacing: -.5px; -webkit-text-stroke: .7px #0056d2; }
.brand-sep { width: 2px; height: 25px; margin: 20px 0 0 25px; background: #dcdcdc; }
.shield { width: 21px; height: 28px; margin: 18px 0 0 31px; }
.uol { display: flex; flex-direction: column; width: 76px; margin: 17px 0 0 5px; color: #111; font: 700 12.7px/15px "Noto Sans", sans-serif; letter-spacing: -.05px; }
.gold { display: flex; flex-direction: column; width: 115px; margin: 15px 0 0 18px; color: #1b1b1b; }
.gold-name { height: 23px; font: 600 20.9px/24px "Noto Sans", sans-serif; }
.gold-sub { align-self: flex-end; font: 700 6.8px/9px Lato, sans-serif; letter-spacing: .15px; }
.switch { width: 21px; height: 21px; margin: 22px 0 0 39px; }
.search { display: flex; width: 374px; height: 36px; margin: 12px 0 0 24px; }
.search-in { width: 300px; padding-left: 12px; border: 1px solid #636363; border-radius: 4px 0 0 4px; color: #757575; font-size: 14.16px; line-height: 35px; }
.search-btn { flex: 1; border-radius: 0 4px 4px 0; background: #0056d2; color: #fff; text-align: center; font-size: 12.4px; font-weight: 700; line-height: 37px; }
.account { display: flex; align-items: center; height: 40px; margin: 13px 37px 0 auto; padding-left: 24px; border-left: 2px solid #dcdcdc; color: #333; font-size: 12.53px; line-height: 40px; }
.avatar { width: 40px; height: 40px; margin-right: 6px; }
.acc-chev { width: 11px; height: 6px; margin-left: 7px; }

/* Course page */
.page { position: relative; height: 743px; display: flex; flex-direction: column; }
.crumbs { display: flex; align-items: center; height: 65px; padding: 0 272px 7px 263px; font-size: 12.54px; line-height: 20px; }
.crumbs a, .review, .view, .actions a { color: #0056d2; }
.cv { width: 8px; height: 14px; color: #333; }
.v1 { margin: 0 15px 0 17px; }
.v2 { margin: 0 6px 0 17px; }
.prev { display: flex; align-items: center; margin-left: auto; padding-top: 1px; color: #0056d2; font-weight: 700; font-size: 12.31px; }
.back { transform: scaleX(-1); color: #0056d2; margin-right: 13px; }
.columns { display: flex; height: 678px; padding-left: 239px; }
.side { width: 288px; font-family: "Open Sans", sans-serif; color: #373a3c; }
.side h2 { padding: 5px 0 5px 24px; height: 32px; color: #1f1f1f; font-size: 13.98px; line-height: 22px; font-weight: 700; }
.item { display: flex; padding: 8px 0 8px 18px; border-left: 6px solid transparent; font-size: 12px; line-height: 18px; }
.item.on { border-color: #2a73cc; background: #f6f6f6; }
.item small { display: block; height: 20px; color: #757575; font-size: 12px; line-height: 22px; }
.st { width: 20px; height: 20px; margin-right: 12px; }
.low { margin-top: 2px; }
.main { width: 947px; margin-left: 95px; }
h1 { height: 76px; margin-top: 18px; font-size: 39.15px; line-height: 76px; font-weight: 400; white-space: nowrap; }
.review { display: block; margin-top: 12px; font-size: 14.1px; line-height: 20px; font-weight: 700; }
.card { display: flex; border-radius: 8px; }
.facts { flex: 1; }
h3 { font-size: 14.13px; line-height: 20px; font-weight: 700; }
.details { height: 192px; margin-top: 38px; padding: 26px 24px 0; background: #f2f7ff; }
dl { display: flex; gap: 24px; color: #636363; font-size: 12.53px; line-height: 20px; }
dl + dl { margin-top: 16px; }
h3 + dl { margin-top: 26px; }
dt { font-size: 12.3px; font-weight: 700; }
.again { width: 128px; height: 48px; margin-top: 50px; border-radius: 3px; background: #0056d2; color: #fff; text-align: center; font-size: 14.1px; font-weight: 700; line-height: 49px; }
.grade { height: 146px; margin-top: 16px; padding: 26px 40px 0 24px; border: 1px solid #e5e5e5; font-weight: 700; font-size: 14.1px; line-height: 20px; }
.grade h3 { font-size: 13.75px; }
.grade p { margin-top: 2px; color: #636363; font-weight: 400; font-size: 12.5px; height: 20px; }
.apos { font-family: "Noto Sans", sans-serif; line-height: 1; }
.grade strong { display: flex; gap: 2px; margin: 36px 0 0 0; }
.grade strong i { width: 7px; height: 2px; background: #555; }
.view, .feedback { margin-top: 36px; }
.feedback { margin-left: 52px; color: #c1c1c1; }
.actions { display: flex; align-items: center; height: 54px; margin-top: 48px; padding: 0 0 2px 1px; border-top: 1px solid #e1e1e1; font-size: 12.3px; line-height: 20px; font-weight: 700; }
.thumb { width: 19px; height: 20px; margin-right: 8px; }
.down { transform: rotate(180deg); }
.a1 { width: 58px; } .a2 { width: 75px; }
.flag { width: 16px; height: 19px; margin-right: 10px; }
.scroll { display: flex; flex-direction: column; align-items: center; width: 15px; height: 678px; margin-left: 95px; padding: 6px 0; background: #f0f0f0; }
.scroll svg { width: 8px; height: 4px; }
.scroll i { width: 11px; height: 633px; margin: 5px 0 20px; background: #c1c1c1; }
.help { position: absolute; right: 20px; bottom: 20px; display: grid; place-items: center; width: 40px; height: 40px; border: 1px solid #2a73cc; border-radius: 2px; background: #fff; box-shadow: 0 1px 3px rgba(0,0,0,.2); color: #2a73cc; }
.help svg, .help span { grid-area: 1 / 1; }
.help svg { width: 24px; height: 24px; }
.help span { font-size: 11px; line-height: 20px; }

/* Guest panel */
.lx { display: flex; align-items: center; height: 32px; padding: 0 5px; background: #2e313c; color: #d3dae3; font-family: "Noto Sans", sans-serif; }
.lx-logo { width: 21px; height: 21px; }
.desks { display: flex; margin-left: 9px; font-size: 14px; line-height: 26px; text-align: center; }
.desks > * { width: 24px; }
.desks b { width: 18px; margin-right: 3px; background: #3b3f4e; }
.lx-icons { display: flex; gap: 11px; margin-left: 5px; }
.lx-icons svg, .task svg { width: 20px; height: 20px; }
.lx-icons .big { width: 22px; height: 22px; margin: -1px; }
.task { display: flex; align-items: center; width: 196px; height: 29px; margin: 0 0 0 3px; padding-left: 5px; background: #282b35; border-bottom: 2px solid #4a90d9; font: 14.82px/24px "Noto Sans", sans-serif; }
.task span { margin-left: 4px; }
.tray { display: flex; align-items: center; margin-left: auto; }
.w16 { width: 16px; height: 20px; }
.spk { width: 16px; height: 16px; margin-left: 12px; }
.tray b { width: 17px; margin-left: 13px; color: #4d9fd8; font-size: 13px; line-height: 20px; letter-spacing: -.3px; }
.clip { width: 20px; height: 21px; margin-left: 10px; }
.net { width: 20px; height: 20px; margin-left: 7px; }
.ring { width: 22px; height: 22px; margin-left: 6px; }
.note { width: 19px; height: 20px; margin-left: 6px; }
.lx-time { width: 29px; margin-left: 9px; font-size: 14.4px; line-height: 20px; }

.vm-status { display: flex; align-items: center; justify-content: flex-end; gap: 3px; height: 25px; padding-right: 2px; background: #efefef; color: #000; font: 10.8px/24px "Noto Sans", sans-serif; }
.vm-status svg { width: 20px; height: 20px; }
.vm-status .w14 { width: 14px; }
.vm-status .w4 { width: 4px; margin: 0 -1px; }

/* Host taskbar */
.taskbar { display: flex; align-items: center; height: 40px; background: #1c2e3a; color: #fff; }
.sys { width: 16px; height: 16px; margin-right: 32px; }
.start { margin-left: 15px; }
.apps { display: flex; gap: 9px; margin-left: -9px; align-self: stretch; }
.apps span { display: grid; place-items: center; width: 40px; border-bottom: 2px solid transparent; padding-top: 2px; }
.apps .open { border-color: #76b9ed; }
.apps svg { width: 24px; height: 24px; }
.apps .left { margin-right: 4px; }
.xsd { fill: #ffd91c; font: 700 12px "Liberation Sans", sans-serif; }
.clock { display: flex; flex-direction: column; width: 66px; margin-left: auto; text-align: center; font: 10.6px/18px "Noto Sans", sans-serif; }
```
